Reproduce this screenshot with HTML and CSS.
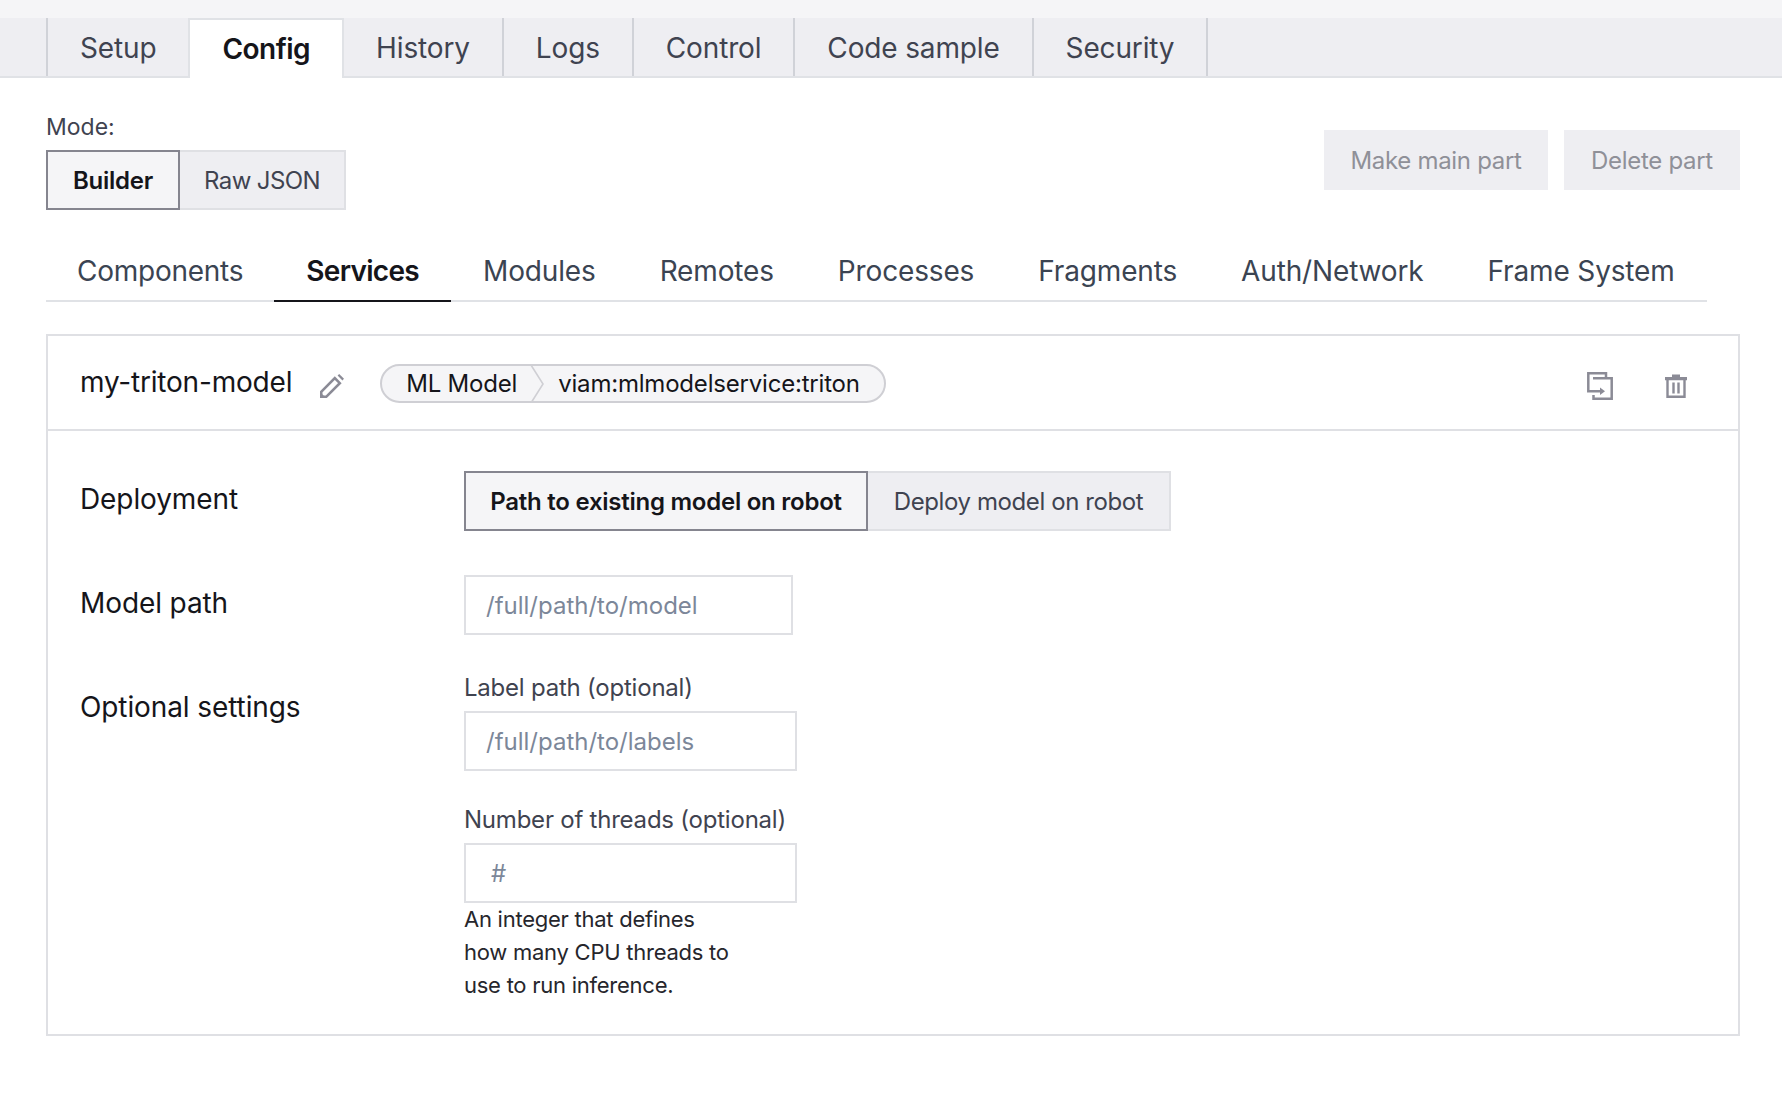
FILE: index.html
```html
<!DOCTYPE html>
<html lang="en">
<head>
  <meta charset="UTF-8" />
  <title>Config</title>
  <link rel="stylesheet" href="styles.css">
</head>
<body>
  <nav class="main-tabs">
    <a class="main-tab">Setup</a>
    <a class="main-tab active">Config</a>
    <a class="main-tab">History</a>
    <a class="main-tab">Logs</a>
    <a class="main-tab">Control</a>
    <a class="main-tab">Code sample</a>
    <a class="main-tab">Security</a>
  </nav>

  <main class="content">
    <div class="mode-row">
      <div>
        <div class="mode-label">Mode:</div>
        <div class="toggle">
          <button class="toggle-btn selected mode-builder">Builder</button>
          <button class="toggle-btn mode-raw">Raw JSON</button>
        </div>
      </div>
      <div class="part-actions">
        <button class="part-btn make-main">Make main part</button>
        <button class="part-btn delete-part">Delete part</button>
      </div>
    </div>

    <nav class="sub-tabs">
      <a class="sub-tab">Components</a>
      <a class="sub-tab active">Services</a>
      <a class="sub-tab">Modules</a>
      <a class="sub-tab">Remotes</a>
      <a class="sub-tab">Processes</a>
      <a class="sub-tab">Fragments</a>
      <a class="sub-tab">Auth/Network</a>
      <a class="sub-tab">Frame System</a>
    </nav>

    <section class="card">
      <header class="card-header">
        <h2 class="card-title">my-triton-model</h2>
        <svg class="pencil" width="24" height="24" viewBox="0 0 24 24">
          <path d="M1.2 22.8v-5L14.8 4.2l5 5L6.2 22.8z" fill="none" stroke="#8b8b96" stroke-width="2.6"/>
          <path d="M0 24v-6l6 6z" fill="#8b8b96"/>
          <path d="M17.6 1.6L19.2 0 24 4.8l-1.6 1.6z" fill="#8b8b96"/>
        </svg>
        <div class="crumb">
          <span class="crumb-part crumb-type">ML Model</span>
          <svg class="crumb-sep" width="14" height="38" viewBox="0 0 14 38">
            <path d="M1 0l12 19L1 38" fill="none" stroke="#cfcfd4" stroke-width="1.6"/>
          </svg>
          <span class="crumb-part crumb-model">viam:mlmodelservice:triton</span>
        </div>
        <div class="card-icons">
          <svg width="26" height="28" viewBox="0 0 26 28">
            <path d="M19 5.5V1.3H1.3v18H15" fill="none" stroke="#8b8b96" stroke-width="2.5"/>
            <path d="M6 6.3h18.7v20.4H6.5V23" fill="none" stroke="#8b8b96" stroke-width="2.5"/>
            <path d="M13 15.5l5 3.8-5 3.8z" fill="#8b8b96"/>
          </svg>
          <svg width="22" height="24" viewBox="0 0 22 24">
            <path d="M2.5 6v16.8h17V6" fill="none" stroke="#8b8b96" stroke-width="2.4"/>
            <path d="M0 3h22v3.2H0z M7 0.6h8V4H7z" fill="#8b8b96"/>
            <path d="M8.5 8.5v11 M13.5 8.5v11" fill="none" stroke="#8b8b96" stroke-width="2.4"/>
          </svg>
        </div>
      </header>

      <div class="card-body">
        <div class="field-row deployment-row">
          <div class="field-name">Deployment</div>
          <div class="toggle">
            <button class="toggle-btn selected deploy-path">Path to existing model on robot</button>
            <button class="toggle-btn deploy-new">Deploy model on robot</button>
          </div>
        </div>

        <div class="field-row path-row">
          <div class="field-name">Model path</div>
          <input class="text-input model-path" type="text" placeholder="/full/path/to/model" />
        </div>

        <div class="field-row optional-row">
          <div class="field-name optional-name">Optional settings</div>
          <div class="optional-fields">
            <label class="input-label" for="labels">Label path (optional)</label>
            <input class="text-input wide" id="labels" type="text" placeholder="/full/path/to/labels" />
            <label class="input-label threads-label" for="threads">Number of threads (optional)</label>
            <input class="text-input wide threads" id="threads" type="text" placeholder="#" />
            <p class="help">An integer that defines<br>how many CPU threads to<br>use to run inference.</p>
          </div>
        </div>
      </div>
    </section>
  </main>
</body>
</html>
```

FILE: styles.css
```css
* {
  box-sizing: border-box;
}
body {
  margin: 0;
  font-family: "Inter", "Liberation Sans", sans-serif;
  color: #26262c;
  background: #fff;
}
button, input {
  font-family: inherit;
}

.main-tabs {
  display: flex;
  height: 78px;
  padding: 18px 0 0 46px;
  background: linear-gradient(#f5f5f7 18px, #eeeef2 18px);
  border-bottom: 2px solid #e0e2e6;
}
.main-tabs .main-tab:first-child {
  border-left: 2px solid #d0d2d8;
}
.main-tab {
  display: flex;
  align-items: center;
  justify-content: center;
  padding: 2px 32px 0;
  font-size: 28px;
  letter-spacing: -0.15px;
  color: #3f4350;
  white-space: nowrap;
  border-right: 2px solid #d0d2d8;
}
.main-tab.active {
  height: 60px;
  padding-top: 0;
  background: #fff;
  color: #15151a;
  font-weight: 600;
  letter-spacing: -0.5px;
  border-top: 2px solid #e0e2e6;
  border-left: 2px solid #e0e2e6;
  border-right: 2px solid #e0e2e6;
  margin-left: -2px;
}

.content {
  padding: 0 42px 0 46px;
}
.mode-row {
  display: flex;
  justify-content: space-between;
  align-items: flex-start;
  padding-top: 34px;
}
.mode-label {
  font-size: 23px;
  line-height: 30px;
  margin-bottom: 8px;
  color: #3f4350;
}
.toggle {
  display: flex;
}
.toggle-btn {
  height: 60px;
  padding: 0;
  font-size: 24px;
  letter-spacing: -0.4px;
  color: #3f4350;
  background: #eeeef2;
  border: 2px solid #dfe0e4;
}
.toggle-btn.selected {
  background: #f5f5f7;
  color: #15151a;
  font-weight: 600;
  letter-spacing: -0.25px;
  border-color: #85858f;
}
.mode-builder {
  width: 134px;
}
.mode-raw {
  width: 166px;
  letter-spacing: -0.6px;
  border-left: 0;
}
.deploy-path {
  width: 404px;
}
.deploy-new {
  width: 303px;
  border-left: 0;
}
.part-actions {
  display: flex;
  gap: 16px;
  margin-top: 18px;
}
.part-btn {
  height: 60px;
  font-size: 24px;
  letter-spacing: -0.3px;
  color: #8f9098;
  background: #eeeef2;
  border: 0;
}
.make-main {
  width: 224px;
}
.delete-part {
  width: 176px;
}

.sub-tabs {
  display: flex;
  width: 1661px;
  margin-top: 35px;
  height: 57px;
  border-bottom: 2px solid #e0e2e6;
}
.sub-tab {
  height: 57px;
  padding: 0 32px;
  font-size: 28px;
  letter-spacing: -0.15px;
  line-height: 52px;
  color: #3b4452;
  white-space: nowrap;
}
.sub-tab:first-child {
  padding: 0 31px;
  letter-spacing: -0.25px;
}
.sub-tab.active {
  color: #15151a;
  font-weight: 600;
  letter-spacing: -0.7px;
  border-bottom: 2px solid #15151a;
}

.card {
  margin-top: 32px;
  height: 702px;
  border: 2px solid #dfe0e4;
}
.card-header {
  display: flex;
  align-items: center;
  height: 95px;
  padding: 0 51px 0 32px;
  border-bottom: 2px solid #dfe0e4;
}
.card-title {
  margin: 0 0 1px;
  font-size: 28px;
  letter-spacing: -0.2px;
  font-weight: 400;
  color: #15151a;
}
.pencil {
  margin-left: 28px;
  margin-top: 6px;
}
.crumb {
  display: flex;
  align-items: center;
  height: 39px;
  margin-top: 2px;
  margin-left: 36px;
  padding: 0 24px;
  font-size: 24px;
  letter-spacing: -0.2px;
  color: #15151a;
  background: #f5f5f7;
  border: 2px solid #cfcfd4;
  border-radius: 20px;
}
.crumb-sep {
  margin: 0 14px 0 13px;
}
.card-icons {
  display: flex;
  align-items: center;
  gap: 52px;
  margin-left: auto;
  padding-top: 6px;
}

.card-body {
  padding: 40px 32px 0;
}
.field-row {
  display: grid;
  grid-template-columns: 384px 1fr;
  align-items: start;
}
.field-row > input {
  justify-self: start;
}
.field-name {
  font-size: 28px;
  letter-spacing: -0.1px;
  line-height: 56px;
  color: #15151a;
}
.path-row {
  margin-top: 44px;
}
.optional-row {
  margin-top: 38px;
}
.optional-name {
  margin-top: 6px;
}
.optional-fields {
  display: flex;
  flex-direction: column;
  align-items: flex-start;
}
.text-input {
  width: 329px;
  height: 60px;
  padding: 0 20px;
  font-size: 24px;
  background: #fff;
  border: 2px solid #dfe0e4;
  border-radius: 0;
}
.text-input::placeholder {
  color: #7c8799;
  opacity: 1;
}
.text-input.wide {
  width: 333px;
}
.threads {
  padding-left: 25px;
}
.input-label {
  font-size: 24px;
  letter-spacing: -0.22px;
  line-height: 30px;
  margin-bottom: 8px;
  color: #3f4350;
}
.threads-label {
  margin-top: 34px;
}
.help {
  margin: 0;
  font-size: 22px;
  letter-spacing: -0.25px;
  line-height: 33px;
  color: #26262c;
}
```
